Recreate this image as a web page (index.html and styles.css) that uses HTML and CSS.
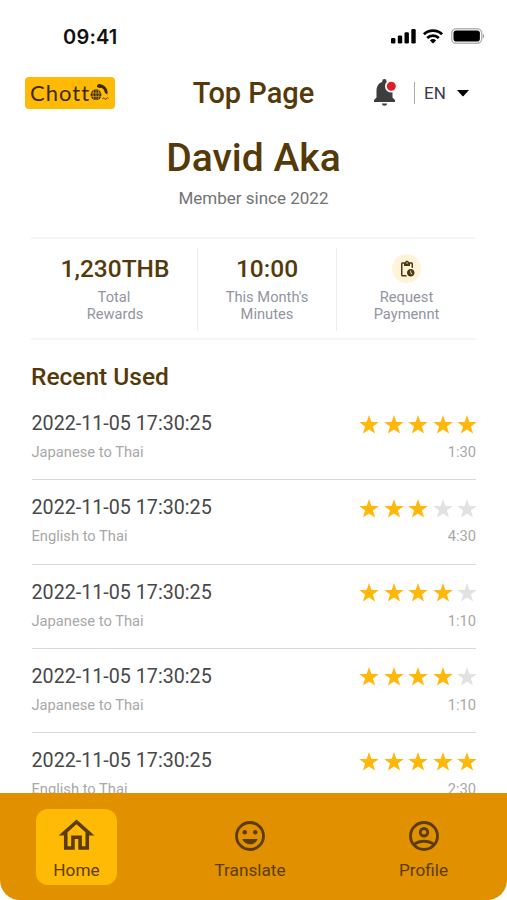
FILE: index.html
```html
<!DOCTYPE html>
<html lang="en">
<head>
<meta charset="utf-8">
<title>Top Page</title>
<link rel="stylesheet" href="styles.css">
</head>
<body>
<svg class="defs" width="0" height="0" aria-hidden="true">
  <symbol id="star" viewBox="0 0 20 19"><path d="M10 0l2.4 6.9 7.4.1-5.9 4.5 2.2 7.1L10 14.4l-6.1 4.2 2.2-7.1L.2 7l7.4-.1z"/></symbol>
</svg>
<div class="screen">
  <div class="status">
    <span class="clock">09:41</span>
    <svg class="signals" viewBox="0 0 94 18" width="94" height="18">
      <rect x="1" y="11" width="4.4" height="5.5" rx="1.3"/>
      <rect x="7.8" y="8.4" width="4.4" height="8.1" rx="1.3"/>
      <rect x="14.5" y="5.2" width="4.4" height="11.3" rx="1.3"/>
      <rect x="21.3" y="2" width="4.4" height="14.5" rx="1.3"/>
      <g fill="none" stroke="#000" stroke-width="2.7">
        <path d="M33.9 7.2a13.2 13.2 0 0 1 18.2 0"/>
        <path d="M37.2 11a8.5 8.5 0 0 1 11.600 0"/>
      </g>
      <path d="M39.900 13.400a4.600 4.600 0 0 1 6.200 0L43 16.600z"/>
      <rect x="61.700" y="1.700" width="30" height="14.600" rx="4.600" fill="#fff" stroke="#b5b5b5" stroke-width="1.500"/>
      <rect x="63.500" y="3.500" width="26.400" height="11" rx="2.800"/>
      <path d="M92.900 7v4.400q1-.5 1-2.200t-1-2.200z" fill="#888"/>
    </svg>
  </div>

  <header class="header">
    <div class="logo">
      <span>Chott</span>
      <svg viewBox="0 0 20 18" width="20" height="18">
        <circle cx="6" cy="10.700" r="5.400" fill="#3b2b0b"/>
        <path d="M1 9h10M1 12.400h10M6 5v11.300M3.900 6q-1.800 4.700 0 9.400M8.100 6q1.800 4.700 0 9.400" fill="none" stroke="#ffba05" stroke-width=".6"/>
        <path d="M7 1.400Q8.500-.5 11.500.4q4.800 1.900 5.900 6.400.5 2.200-.2 3.600l-2.500-1.800q.2-3.200-3-4.900-1.800.8-4.700-.6z" fill="#3b2b0b"/>
        <path d="M12.300 14.700q1.200-1.100 2.300 0t2.100-.1q1-1.700 1.600-.3" fill="none" stroke="#3b2b0b" stroke-width=".9"/>
      </svg>
    </div>
    <h1 class="title">Top Page</h1>
    <div class="tools">
      <svg viewBox="0 0 26 28" width="26" height="28">
        <path d="M2 23v-2l2.500-2.400v-6.500C4.500 7.200 6.700 4 10.200 3.100V2.200a2.200 2.200 0 0 1 4.400 0v.9c3.500.9 5.900 4 5.900 9v6.500L23 21v2z" fill="#3d3d40"/>
        <path d="M9.900 24.500h5.200a2.600 2.200 0 0 1-5.200 0z" fill="#3d3d40"/>
        <circle cx="19.300" cy="7.300" r="6.300" fill="#fff"/>
        <circle cx="19.300" cy="7.300" r="4.500" fill="#dc2027"/>
      </svg>
      <i class="rule"></i>
      <span class="lang">EN</span>
      <svg class="caret" viewBox="0 0 12 7" width="12" height="7"><path d="M0 0h12L6.600 5.900q-.6.6-1.200 0z"/></svg>
    </div>
  </header>

  <section class="person">
    <h2>David Aka</h2>
    <p>Member since 2022</p>
  </section>

  <section class="stats">
    <div class="stat"><strong>1,230THB</strong><span>Total</span><span class="nudge">Rewards</span></div>
    <div class="stat"><strong>10:00</strong><span>This Month's</span><span>Minutes</span></div>
    <div class="stat">
      <div class="badge">
        <svg viewBox="0 0 24 24" width="18" height="18" fill="#4d370b">
          <path d="M17 12c-2.760 0-5 2.240-5 5s2.240 5 5 5 5-2.240 5-5-2.240-5-5-5zm1.650 7.350L16.500 17.200V14h1v2.790l1.850 1.850-.7.710zM18 3h-3.180C14.400 1.840 13.300 1 12 1s-2.400.84-2.820 2H6c-1.100 0-2 .9-2 2v15c0 1.100.9 2 2 2h6.110c-.59-.57-1.070-1.250-1.420-2H6V5h2v3h8V5h2v5.080c.71.1 1.380.31 2 .6V5c0-1.100-.9-2-2-2zm-6 2c-.55 0-1-.45-1-1s.45-1 1-1 1 .45 1 1-.45 1-1 1z"/>
        </svg>
      </div>
      <span>Request</span><span>Paymennt</span>
    </div>
  </section>

  <main class="recent">
    <h3>Recent Used</h3>
    <ul>
      <li>
        <div class="line"><time>2022-11-05 17:30:25</time><div class="stars"><svg><use href="#star"/></svg><svg><use href="#star"/></svg><svg><use href="#star"/></svg><svg><use href="#star"/></svg><svg><use href="#star"/></svg></div></div>
        <div class="line meta"><span>Japanese to Thai</span><span>1:30</span></div>
      </li>
      <li>
        <div class="line"><time>2022-11-05 17:30:25</time><div class="stars"><svg><use href="#star"/></svg><svg><use href="#star"/></svg><svg><use href="#star"/></svg><svg class="off"><use href="#star"/></svg><svg class="off"><use href="#star"/></svg></div></div>
        <div class="line meta"><span>English to Thai</span><span>4:30</span></div>
      </li>
      <li>
        <div class="line"><time>2022-11-05 17:30:25</time><div class="stars"><svg><use href="#star"/></svg><svg><use href="#star"/></svg><svg><use href="#star"/></svg><svg><use href="#star"/></svg><svg class="off"><use href="#star"/></svg></div></div>
        <div class="line meta"><span>Japanese to Thai</span><span>1:10</span></div>
      </li>
      <li>
        <div class="line"><time>2022-11-05 17:30:25</time><div class="stars"><svg><use href="#star"/></svg><svg><use href="#star"/></svg><svg><use href="#star"/></svg><svg><use href="#star"/></svg><svg class="off"><use href="#star"/></svg></div></div>
        <div class="line meta"><span>Japanese to Thai</span><span>1:10</span></div>
      </li>
      <li>
        <div class="line"><time>2022-11-05 17:30:25</time><div class="stars"><svg><use href="#star"/></svg><svg><use href="#star"/></svg><svg><use href="#star"/></svg><svg><use href="#star"/></svg><svg><use href="#star"/></svg></div></div>
        <div class="line meta"><span>English to Thai</span><span>2:30</span></div>
      </li>
    </ul>
  </main>

  <nav class="nav">
    <a class="tab active">
      <svg viewBox="0 0 24 24" width="43" height="43"><path d="M12 5.690l5 4.500V18h-2v-6H9v6H7v-7.810l5-4.500M12 3L2 12h3v8h6v-6h2v6h6v-8h3L12 3z"/></svg>
      <span>Home</span>
    </a>
    <a class="tab">
      <svg viewBox="0 0 24 24" width="36" height="36">
        <circle cx="12" cy="12" r="9" fill="none" stroke="#5b3d04" stroke-width="1.900"/>
        <circle cx="8.500" cy="9.500" r="1.500"/><circle cx="15.500" cy="9.500" r="1.500"/>
        <path d="M6.900 14h10.200c-.8 2.100-2.800 3.500-5.100 3.500S7.700 16.100 6.900 14z"/>
      </svg>
      <span>Translate</span>
    </a>
    <a class="tab">
      <svg viewBox="0 0 24 24" width="36" height="36" fill="none" stroke="#5b3d04" stroke-width="1.900">
        <circle cx="12" cy="12" r="9"/><circle cx="12" cy="9.500" r="2.500"/>
        <path d="M5.500 17.600C7.200 16.200 9.500 15.500 12 15.500s4.800.7 6.500 2.100"/>
      </svg>
      <span>Profile</span>
    </a>
  </nav>
</div>
</body>
</html>
```
FILE: styles.css
```css
* { box-sizing: border-box; margin: 0; padding: 0; }
body { background: #fff; font-family: Roboto, "Liberation Sans", sans-serif; }
svg { display: block; flex: none; }
.defs { position: absolute; }
.screen { width: 507px; height: 900px; display: flex; flex-direction: column; overflow: hidden; }

.status { height: 62px; flex: none; display: flex; justify-content: space-between; padding: 24px 23px 0 63px; }
.clock { font: 600 20px/26px Inter, sans-serif; letter-spacing: .2px; color: #111; }
.signals { margin-top: 3px; }

.header { height: 62px; flex: none; display: grid; grid-template-columns: 168px 1fr 168px; align-items: center; }
.logo { width: 90px; height: 32px; margin-left: 25px; border-radius: 4px; background: #ffba05; display: flex; align-items: center; padding-left: 5px; }
.logo span { font: 400 22px/30px Lato, sans-serif; letter-spacing: 1px; color: #3b2b0b; width: 60px; }
.title { font-size: 29px; line-height: 34px; font-weight: 500; color: #553a09; text-align: center; }
.tools { display: flex; align-items: center; padding-left: 33px; }
.rule { width: 1px; height: 22px; background: #aaa; margin-left: 16px; }
.lang { font-size: 17px; line-height: 22px; color: #39394d; margin-left: 9px; width: 24px; }
.caret { margin-left: 9px; }

.person { height: 113px; flex: none; text-align: center; padding-top: 10px; }
.person h2 { font-size: 39px; line-height: 48px; font-weight: 500; color: #553a09; }
.person p { font-size: 17px; line-height: 22px; margin-top: 5px; color: #737373; }

.stats { height: 103px; flex: none; margin: 0 31px; border-top: 2px solid #f5f5f5; border-bottom: 2px solid #f5f5f5; display: grid; grid-template-columns: 167px 139px 139px; padding: 9px 0 7px; }
.stat { display: flex; flex-direction: column; align-items: center; padding-top: 5px; border-right: 1px solid #ededed; }
.stat:last-child { border-right: 0; }
.stat strong { font-size: 24.500px; line-height: 32px; font-weight: 500; color: #553a09; margin-bottom: 4px; }
.stat:first-child strong, .stat .nudge { margin-left: 2px; }
.stat span { font-size: 14.700px; line-height: 17.300px; color: #92959f; }
.badge { width: 29px; height: 29px; border-radius: 50%; background: #fff4d9; display: grid; place-items: center; margin: 1px 0 6px; }

.recent { flex: 1; min-height: 0; overflow: hidden; padding: 21px 31px 0; }
.recent h3 { font-size: 24.500px; line-height: 32px; font-weight: 500; color: #553a09; margin-bottom: 3px; }
.recent ul { list-style: none; margin-left: .5px; }
.recent li { height: 84.300px; border-bottom: 1px solid #d9d9d9; padding-top: 15px; }
.line { display: flex; justify-content: space-between; align-items: center; }
.line time { font-size: 19.700px; line-height: 26px; color: #484848; }
.stars { display: flex; gap: 4.500px; margin-right: -1px; }
.stars svg { width: 20px; height: 19px; fill: #ffb80a; }
.stars .off { fill: #e2e2e2; }
.meta { font-size: 14.700px; line-height: 20px; color: #a8a8a8; margin-top: 5px; }

.nav { height: 107px; flex: none; background: #e19000; border-radius: 0 0 20px 20px; display: flex; justify-content: space-between; padding: 16px 43px 0 36px; }
.tab { width: 81px; height: 76px; border-radius: 12px; display: flex; flex-direction: column; align-items: center; justify-content: space-between; padding: 9px 0 4px; fill: #5b3d04; color: #5b3d04; }
.tab span { font-size: 17.200px; line-height: 22px; }
.active { background: #ffba05; padding-top: 5px; }
```
